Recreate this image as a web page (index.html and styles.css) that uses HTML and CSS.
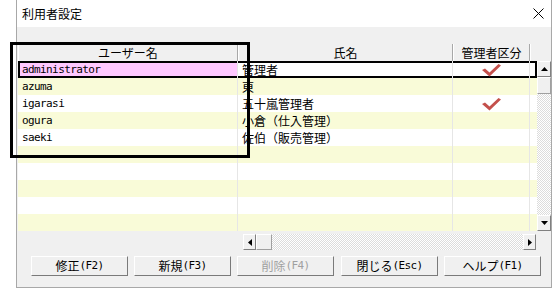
FILE: index.html
```html
<!DOCTYPE html>
<html lang="ja">
  <head>
    <meta charset="UTF-8" />
    <title>利用者設定</title>
    <link rel="stylesheet" href="styles.css">
  </head>
  <body>
    <div class="window">
      <div class="titlebar">
        <span class="title">利用者設定</span>
        <svg class="close" width="11" height="11" viewBox="0 0 11 11">
          <path d="M0.5 0.5 L10.5 10.5 M10.5 0.5 L0.5 10.5" stroke="#000" stroke-width="1" fill="none" />
        </svg>
      </div>

      <div class="client">
        <div class="grid">
          <div class="grid-main">
            <table class="users">
              <colgroup>
                <col class="w-user" />
                <col class="w-name" />
                <col class="w-admin" />
                <col class="w-fill" />
              </colgroup>
              <thead>
                <tr>
                  <th>ユーザー名</th>
                  <th>氏名</th>
                  <th>管理者区分</th>
                  <th class="fill"></th>
                </tr>
              </thead>
              <tbody>
                <tr class="selected">
                  <td class="user"><span class="en">administrator</span></td>
                  <td>管理者</td>
                  <td class="admin">
                    <svg class="check" width="19" height="13" viewBox="0 0 19 13">
                      <path d="M0 6 L3 4.5 L7.5 8.5 L16.5 0 L19 1.5 L7.5 12.5 Z" fill="#c4504b" />
                    </svg>
                  </td>
                  <td class="fill"></td>
                </tr>
                <tr>
                  <td><span class="en">azuma</span></td>
                  <td>東</td>
                  <td></td>
                  <td class="fill"></td>
                </tr>
                <tr>
                  <td><span class="en">igarasi</span></td>
                  <td>五十嵐管理者</td>
                  <td class="admin">
                    <svg class="check" width="19" height="13" viewBox="0 0 19 13">
                      <path d="M0 6 L3 4.5 L7.5 8.5 L16.5 0 L19 1.5 L7.5 12.5 Z" fill="#c4504b" />
                    </svg>
                  </td>
                  <td class="fill"></td>
                </tr>
                <tr>
                  <td><span class="en">ogura</span></td>
                  <td>小倉（仕入管理）</td>
                  <td></td>
                  <td class="fill"></td>
                </tr>
                <tr>
                  <td><span class="en">saeki</span></td>
                  <td>佐伯（販売管理）</td>
                  <td></td>
                  <td class="fill"></td>
                </tr>
                <tr><td></td><td></td><td></td><td class="fill"></td></tr>
                <tr><td></td><td></td><td></td><td class="fill"></td></tr>
                <tr><td></td><td></td><td></td><td class="fill"></td></tr>
                <tr><td></td><td></td><td></td><td class="fill"></td></tr>
                <tr><td></td><td></td><td></td><td class="fill"></td></tr>
              </tbody>
            </table>

            <div class="vscroll">
              <div class="vscroll-top"></div>
              <div class="sbtn">
                <svg width="7" height="4" viewBox="0 0 7 4"><path d="M0 4 L3.5 0 L7 4 Z" fill="#000" /></svg>
              </div>
              <div class="thumb-v"></div>
              <div class="track"></div>
              <div class="sbtn">
                <svg width="7" height="4" viewBox="0 0 7 4"><path d="M0 0 L7 0 L3.5 4 Z" fill="#000" /></svg>
              </div>
            </div>
          </div>

          <div class="hscroll-row">
            <div class="hscroll">
              <div class="sbtn sbtn-h">
                <svg width="4" height="7" viewBox="0 0 4 7"><path d="M4 0 L4 7 L0 3.5 Z" fill="#000" /></svg>
              </div>
              <div class="thumb-h"></div>
              <div class="track"></div>
              <div class="sbtn sbtn-h">
                <svg width="4" height="7" viewBox="0 0 4 7"><path d="M0 0 L0 7 L4 3.5 Z" fill="#000" /></svg>
              </div>
            </div>
          </div>
        </div>

        <div class="buttons">
          <button class="btn">修正<span class="en">(F2)</span></button>
          <button class="btn">新規<span class="en">(F3)</span></button>
          <button class="btn" disabled>削除<span class="en">(F4)</span></button>
          <button class="btn btn-gap">閉じる<span class="en">(Esc)</span></button>
          <button class="btn">ヘルプ<span class="en">(F1)</span></button>
        </div>
      </div>
    </div>

    <!-- annotation frame drawn over the user column -->
    <div class="mark"></div>
  </body>
</html>
```

FILE: styles.css
```css
* {
  margin: 0;
  padding: 0;
  box-sizing: border-box;
}

body {
  background: #fff;
  color: #000;
  font-family: "Noto Sans CJK JP", sans-serif;
  font-size: 12px;
  line-height: 16px;
}

.en {
  font-family: "DejaVu Sans Mono", monospace;
  font-size: 11px;
  letter-spacing: -0.6px;
  line-height: 16px;
  vertical-align: top;
}

.window {
  margin-left: 16px;
  width: 536px;
  height: 288px;
  border: 1px solid #a8a8a8;
  border-top: none;
  display: flex;
  flex-direction: column;
}

.titlebar {
  height: 27px;
  background: #fff;
  display: flex;
  align-items: center;
  justify-content: space-between;
  padding: 0 7px 0 5px;
}
.title {
  font-size: 12px;
}

.client {
  flex: 1;
  background: #f0f0f0;
  padding: 17px 0 0 1px;
}

/* grid */
.grid-main {
  display: flex;
}

.users {
  width: 519px;
  table-layout: fixed;
  border-collapse: separate;
  border-spacing: 0;
}
.w-user { width: 220px; }
.w-name { width: 215px; }
.w-admin { width: 77px; }
.w-fill { width: 7px; }

.users th {
  height: 17px;
  background: #f0f0f0;
  font-weight: normal;
  text-align: center;
  border-left: 1px solid #fff;
  border-right: 1px solid #a8a8a8;
  padding: 0;
}
.users th.fill {
  border-right: none;
}

.users td {
  height: 17px;
  max-height: 17px;
  padding: 0 0 0 4px;
  white-space: nowrap;
  overflow: hidden;
  border-right: 1px solid #e6e6e6;
  background: #fff;
}
.users td.fill {
  padding: 0;
  border-right: none;
}
.users tbody tr:nth-child(even) td {
  background: #f9fbd8;
}
.users td.admin {
  text-align: center;
  padding: 0;
}
.check {
  display: block;
  margin: 1px auto 0;
}

.users tr.selected td {
  box-shadow: inset 0 2px 0 #000, inset 0 -2px 0 #000;
}
.users tr.selected td.user {
  background: #ffc8ff;
  box-shadow: inset 0 2px 0 #000, inset 0 -2px 0 #000, inset 2px 0 0 #000;
}
.users tr.selected td.fill {
  box-shadow: inset 0 2px 0 #000, inset 0 -2px 0 #000, inset -2px 0 0 #000;
}

/* scroll bars */
.vscroll {
  width: 14px;
  display: flex;
  flex-direction: column;
}
.vscroll-top {
  height: 17px;
}
.sbtn {
  height: 16px;
  background: #f0f0f0;
  border: 1px solid;
  border-color: #fff #808080 #808080 #fff;
  display: flex;
  align-items: center;
  justify-content: center;
}
.sbtn-h {
  width: 13px;
  height: 16px;
}
.thumb-v {
  height: 17px;
  background: #f0f0f0;
  border: 1px solid;
  border-color: #fff #a0a0a0 #a0a0a0 #fff;
}
.thumb-h {
  width: 16px;
  background: #f0f0f0;
  border: 1px solid;
  border-color: #fff #a0a0a0 #a0a0a0 #fff;
}
.track {
  flex: 1;
  background: repeating-conic-gradient(#dcdcdc 0 25%, #fff 0 50%) 0 0 / 2px 2px;
}

.hscroll-row {
  margin-top: 3px;
  padding-left: 225px;
}
.hscroll {
  width: 293px;
  height: 16px;
  display: flex;
}

/* buttons */
.buttons {
  display: flex;
  gap: 6px;
  margin-top: 6px;
  padding-left: 13px;
}
.btn {
  width: 97px;
  height: 20px;
  background: #f0f0f0;
  border: 1px solid;
  border-color: #fff #7a7a7a #7a7a7a #fff;
  font-family: "Noto Sans CJK JP", sans-serif;
  font-size: 12px;
  line-height: 16px;
  color: #000;
}
.btn:disabled {
  color: #a0a0a0;
}
.btn-gap {
  margin-left: 1px;
}

.mark {
  position: absolute;
  left: 10px;
  top: 42px;
  width: 240px;
  height: 116px;
  border: 3px solid #000;
}
```
